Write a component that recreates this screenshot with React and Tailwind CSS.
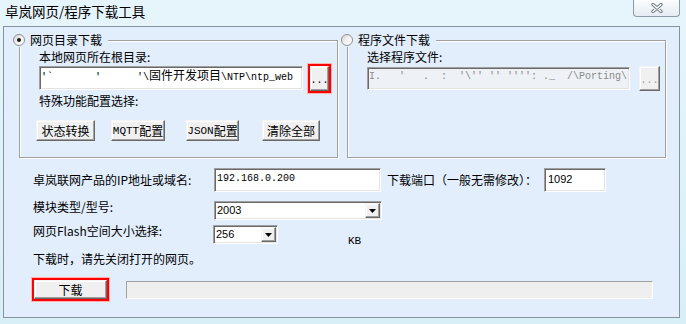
import React from 'react';

// classic 3D frames used by the dialog controls
const sunken =
  'border border-t-[#a0a0a0] border-l-[#a0a0a0] border-b-white border-r-white shadow-[inset_1px_1px_0_#696969,inset_-1px_-1px_0_#e3e3e3]';
const raised =
  'border border-t-[#f4f4f4] border-l-[#f4f4f4] border-b-[#696969] border-r-[#696969] bg-[#f0f0f0] shadow-[inset_-1px_-1px_0_#a0a0a0,inset_1px_1px_0_#fff]';
const mono = "font-['Liberation_Mono',monospace] text-[10px]";
const monoLg = "font-['Liberation_Mono',monospace] text-[11px]";
const sans = "font-['Liberation_Sans',sans-serif] text-[11px]";

const Radio = ({ checked }) => (
  <span className="flex h-[12px] w-[12px] items-center justify-center rounded-full border border-[#8e8f8f] bg-gradient-to-br from-[#d4d4d4] via-[#f2f2f2] to-white">
    {checked && <span className="h-[4px] w-[4px] rounded-full bg-[#1a1a1a]" />}
  </span>
);

const GroupBox = ({ title, checked, className = '', children }) => (
  <div
    className={`relative h-[118px] w-[319px] border border-[#a0a0a0] shadow-[inset_1px_1px_0_#fff,1px_1px_0_#fff] ${className}`}
  >
    <div className="absolute -left-[7px] -top-[8px] flex items-center gap-[5px] bg-[#e2eefc] pr-[6px]">
      <Radio checked={checked} />
      <span>{title}</span>
    </div>
    {children}
  </div>
);

const Btn = ({ className = '', children }) => (
  <button className={`flex items-center justify-center ${raised} ${className}`}>{children}</button>
);

const Select = ({ value, className = '' }) => (
  <div className={`flex h-[19px] bg-white p-[1px] ${sunken} ${className}`}>
    <span className={`flex-1 pl-[1px] leading-[15px] ${sans}`}>{value}</span>
    <span className={`flex w-[15px] items-center justify-center ${raised}`}>
      <svg width="7" height="4" viewBox="0 0 7 4">
        <path d="M0 0h7L3.5 4z" fill="#000" />
      </svg>
    </span>
  </div>
);

const CloseButton = () => (
  <div className="ml-auto mr-[6px] flex h-[17px] w-[47px] items-center justify-center rounded-b-[4px] border border-t-0 border-[#8d9ba8] bg-gradient-to-b from-[#fbfdfe] to-[#e4ebf1]">
    <svg width="12" height="10" viewBox="0 0 12 10">
      <path d="M2 1.5l8 7M10 1.5l-8 7" stroke="#6f7b86" strokeWidth="3.4" strokeLinecap="round" />
      <path d="M2 1.5l8 7M10 1.5l-8 7" stroke="#fff" strokeWidth="1.4" strokeLinecap="round" />
    </svg>
  </div>
);

export default function App() {
  return (
    <div className="h-[324px] w-[686px] overflow-hidden bg-gradient-to-b from-[#e6f5fb] to-[#d8eff8] font-['Noto_Sans_CJK_SC',sans-serif] text-[12px] leading-[14px] text-black">
      {/* title bar */}
      <div className="flex h-[26px] items-start">
        <span className="ml-[5px] mt-[3px] text-[13.5px] leading-[16px]">卓岚网页/程序下载工具</span>
        <CloseButton />
      </div>

      {/* client area */}
      <div className="ml-[3px] h-[292px] w-[677px] border border-[#86939e] bg-[#e2eefc]">
        <div className="ml-[15px] mt-[13px] flex">
          <GroupBox title="网页目录下载" checked>
            <div className="pl-[19px] pt-[9px]">
              <div>本地网页所在根目录:</div>
              <div className="flex items-start">
                <div className={`mt-[2px] h-[24px] w-[264px] overflow-hidden bg-white pl-[1px] pt-[1px] whitespace-pre ${sunken}`}>
                  <span className={mono}>{"'`       '      '\\"}</span>
                  <span>固件开发项目</span>
                  <span className={mono}>{'\\NTP\\ntp_web'}</span>
                </div>
                <div className="ml-[5px] flex h-[29px] w-[23px] items-center justify-center border-2 border-[#f00] shadow-[0_0_0_1px_#ffb4b4]">
                  <Btn className={`h-[25px] w-[19px] pt-[4px] ${mono}`}>...</Btn>
                </div>
              </div>
              <div className="mt-[1px]">特殊功能配置选择:</div>
              <div className="-ml-[3px] mt-[12px] flex">
                <Btn className="h-[21px] w-[59px]">状态转换</Btn>
                <Btn className="ml-[16px] h-[21px] w-[54px]">
                  <span className={monoLg}>MQTT</span>配置
                </Btn>
                <Btn className="ml-[21px] h-[21px] w-[53px]">
                  <span className={monoLg}>JSON</span>配置
                </Btn>
                <Btn className="ml-[23px] h-[21px] w-[58px]">清除全部</Btn>
              </div>
            </div>
          </GroupBox>

          <GroupBox title="程序文件下载" className="ml-[9px]">
            <div className="pl-[19px] pt-[9px]">
              <div>选择程序文件:</div>
              <div className="flex items-start">
                <div className={`mt-[3px] h-[23px] w-[263px] overflow-hidden bg-[#eef2f7] pl-[1px] pt-[2px] whitespace-pre text-[#8a8a8a] ${mono} ${sunken}`}>
                  {"I.   '   .  :  '\\'' '' '''': ._  /\\Porting\\"}
                </div>
                <Btn className={`ml-[9px] mt-[2px] h-[25px] w-[21px] pt-[4px] text-[#a0a0a0] ${mono}`}>...</Btn>
              </div>
            </div>
          </GroupBox>
        </div>

        {/* address / module settings */}
        <div className="mt-[10px] flex flex-col pl-[29px]">
          <div className="flex h-[24px] items-center">
            <span className="w-[181px]">卓岚联网产品的IP地址或域名:</span>
            <div className={`h-[24px] w-[167px] bg-white pl-[2px] pt-[3px] leading-[14px] ${mono} ${sunken}`}>192.168.0.200</div>
            <span className="ml-[6px] w-[157px]">下载端口（一般无需修改）：</span>
            <div className={`h-[24px] w-[62px] bg-white pl-[3px] pt-[3px] leading-[14px] ${sans} ${sunken}`}>1092</div>
          </div>

          <div className="mt-[9px] flex h-[19px] items-start">
            <span className="-mt-[1px] w-[181px]">模块类型/型号:</span>
            <Select value="2003" className="w-[168px]" />
          </div>

          <div className="mt-[5px] flex h-[19px] items-start">
            <span className="-mt-[1px] w-[180px]">网页Flash空间大小选择:</span>
            <Select value="256" className="w-[65px]" />
            <span className={`ml-[70px] mt-[9px] leading-[14px] ${monoLg}`}>KB</span>
          </div>

          <div className="mt-[8px]">下载时，请先关闭打开的网页。</div>

          <div className="mt-[12px] flex items-center">
            <div className="-ml-[1px] flex h-[23px] w-[77px] items-center justify-center border-2 border-[#f00] shadow-[0_0_0_1px_#ffb4b4]">
              <Btn className="h-[19px] w-[73px]">下载</Btn>
            </div>
            <div className="ml-[17px] h-[18px] w-[527px] border border-t-[#a0a0a0] border-l-[#a0a0a0] border-b-white border-r-white bg-[#efefef]" />
          </div>
        </div>
      </div>
    </div>
  );
}
